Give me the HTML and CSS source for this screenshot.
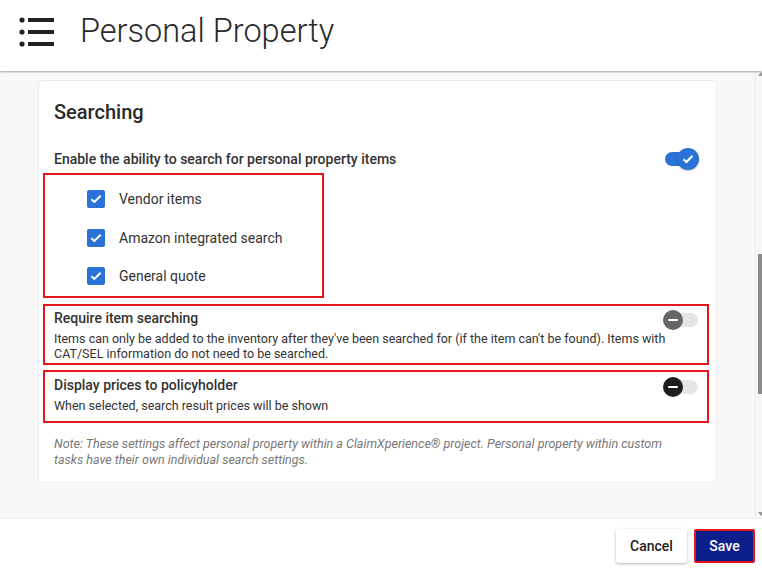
FILE: index.html
```html
<!DOCTYPE html>
<html lang="en">
<head>
    <meta charset="UTF-8">
    <meta name="viewport" content="width=device-width, initial-scale=1.0">
    <title>Personal Property</title>
    <link rel="stylesheet" href="styles.css">
</head>
<body>
    <header class="top-bar">
        <svg class="menu-icon" width="36" height="30" viewBox="0 0 36 30">
            <circle cx="3" cy="3" r="2.6" fill="#222"/>
            <circle cx="3" cy="15" r="2.6" fill="#222"/>
            <circle cx="3" cy="27" r="2.6" fill="#222"/>
            <rect x="9" y="1" width="26" height="4" fill="#222"/>
            <rect x="9" y="13" width="26" height="4" fill="#222"/>
            <rect x="9" y="25" width="26" height="4" fill="#222"/>
        </svg>
        <h1 class="page-title">Personal Property</h1>
    </header>

    <div class="body-area">
        <main class="content">
            <section class="card">
                <h2 class="card-title">Searching</h2>

                <div class="setting-row main-setting">
                    <span class="setting-name">Enable the ability to search for personal property items</span>
                    <span class="toggle on">
                        <span class="knob">
                            <svg width="12" height="10" viewBox="0 0 12 10"><path d="M1.5 5.2 L4.5 8 L10.5 1.8" fill="none" stroke="#fff" stroke-width="2"/></svg>
                        </span>
                    </span>
                </div>

                <div class="outline check-group">
                    <label class="check-item"><span class="checkbox"><svg width="12" height="10" viewBox="0 0 12 10"><path d="M1.3 5.2 L4.4 8 L10.7 1.8" fill="none" stroke="#fff" stroke-width="2"/></svg></span>Vendor items</label>
                    <label class="check-item"><span class="checkbox"><svg width="12" height="10" viewBox="0 0 12 10"><path d="M1.3 5.2 L4.4 8 L10.7 1.8" fill="none" stroke="#fff" stroke-width="2"/></svg></span>Amazon integrated search</label>
                    <label class="check-item"><span class="checkbox"><svg width="12" height="10" viewBox="0 0 12 10"><path d="M1.3 5.2 L4.4 8 L10.7 1.8" fill="none" stroke="#fff" stroke-width="2"/></svg></span>General quote</label>
                </div>

                <div class="outline option-box">
                    <div class="option-text">
                        <div class="setting-name">Require item searching</div>
                        <p class="option-desc">Items can only be added to the inventory after they've been searched for (if the item can't be found). Items with CAT/SEL information do not need to be searched.</p>
                    </div>
                    <span class="toggle off"><span class="knob grey"><i class="dash"></i></span></span>
                </div>

                <div class="outline option-box short">
                    <div class="option-text">
                        <div class="setting-name">Display prices to policyholder</div>
                        <p class="option-desc">When selected, search result prices will be shown</p>
                    </div>
                    <span class="toggle off"><span class="knob dark"><i class="dash"></i></span></span>
                </div>

                <p class="note">Note: These settings affect personal property within a ClaimXperience® project. Personal property within custom tasks have their own individual search settings.</p>
            </section>
        </main>
        <div class="scrollbar">
            <span class="arrow up"></span>
            <span class="thumb"></span>
            <span class="arrow down"></span>
        </div>
    </div>

    <footer class="footer">
        <button class="btn cancel">Cancel</button>
        <button class="btn save">Save</button>
    </footer>
</body>
</html>
```

FILE: styles.css
```css
html, body {
    margin: 0;
    padding: 0;
    height: 100%;
}

body {
    font-family: Roboto, "Liberation Sans", Arial, sans-serif;
    color: #333;
    display: flex;
    flex-direction: column;
    overflow: hidden;
    background-color: #fff;
}

.top-bar {
    height: 71px;
    flex: 0 0 71px;
    box-sizing: border-box;
    padding-bottom: 9px;
    display: flex;
    align-items: center;
    background-color: #fff;
    box-shadow: 0 1px 2px rgba(0, 0, 0, 0.35);
    position: relative;
    z-index: 2;
}

.menu-icon {
    margin-left: 19px;
    margin-top: 1px;
}

.page-title {
    margin: 0 0 0 25px;
    font-size: 32.5px;
    font-weight: 300;
    color: #2a2a2a;
}

.body-area {
    flex: 1;
    display: flex;
    background-color: #f8f8f8;
    min-height: 0;
}

.content {
    flex: 1;
    padding: 9px 38px 0 38px;
}

.card {
    width: 679px;
    box-sizing: border-box;
    background-color: #fff;
    border: 1px solid #ececec;
    border-radius: 4px;
    padding: 19px 10px 14px 4px;
}

.card-title {
    margin: 0 0 0 11px;
    font-size: 20px;
    font-weight: 500;
    line-height: 24px;
    color: #2b2b2b;
}

.setting-name {
    font-size: 14px;
    font-weight: 500;
    color: #333;
}

.setting-row {
    display: flex;
    justify-content: space-between;
    align-items: center;
    margin: 24px 0 3px 11px;
    height: 22px;
    padding-right: 8px;
}

.toggle {
    position: relative;
    display: inline-block;
    width: 34px;
    height: 14px;
    border-radius: 7px;
    background-color: #e6e6e6;
}

.toggle.on {
    background-color: #2a72d6;
    width: 28px;
    margin-right: 5px;
}

.knob {
    position: absolute;
    top: -4px;
    width: 22px;
    height: 22px;
    border-radius: 50%;
    display: flex;
    align-items: center;
    justify-content: center;
}

.toggle.on .knob {
    right: -6px;
    top: -4px;
    background-color: #2a72d6;
    box-shadow: 0 1px 2px rgba(0, 0, 0, 0.25);
}

.toggle.off .knob {
    left: -1px;
    top: -3px;
    width: 20px;
    height: 20px;
}

.knob.grey {
    background-color: #666;
}

.knob.dark {
    background-color: #1e1e1e;
}

.dash {
    display: block;
    width: 10px;
    height: 2px;
    background-color: #fff;
    border-radius: 1px;
}

.outline {
    border: 2px solid #e8141c;
    box-sizing: border-box;
}

.check-group {
    width: 281px;
    height: 125px;
    padding: 14px 0 0 42px;
}

.check-item {
    display: flex;
    align-items: center;
    font-size: 14px;
    color: #333;
    height: 20px;
    margin-bottom: 18.5px;
}

.checkbox {
    width: 18px;
    height: 18px;
    border-radius: 2px;
    background-color: #2a72d6;
    display: flex;
    align-items: center;
    justify-content: center;
    margin-right: 14px;
}

.option-box {
    width: 666px;
    margin-top: 6px;
    height: 61px;
    display: flex;
    justify-content: space-between;
    align-items: flex-start;
    padding: 4px 9px 0 9px;
}

.option-box.short {
    margin-top: 5px;
    height: 53px;
    padding-top: 5px;
}

.option-box .toggle {
    margin-top: 3px;
    flex: 0 0 auto;
}

.option-text {
    flex: 1;
    min-width: 0;
}

.option-desc {
    margin: 5px -40px 0 0;
    font-size: 12.5px;
    line-height: 15px;
    color: #333;
}

.note {
    margin: 13px 0 0 11px;
    font-size: 12.5px;
    line-height: 16px;
    font-style: italic;
    color: #777;
    padding-right: 20px;
}

.scrollbar {
    width: 8px;
    flex: 0 0 8px;
    border-left: 1px solid #ececec;
    background-color: #f8f8f8;
    position: relative;
}

.thumb {
    position: absolute;
    left: 2px;
    right: 0;
    top: 183px;
    height: 140px;
    background-color: #8c8c8c;
}

.arrow {
    position: absolute;
    left: 2px;
    width: 0;
    height: 0;
    border-left: 3px solid transparent;
    border-right: 3px solid transparent;
}

.arrow.up {
    top: 1px;
    border-bottom: 4px solid #999;
}

.arrow.down {
    bottom: 2px;
    border-top: 4px solid #999;
}

.footer {
    flex: 0 0 55px;
    height: 55px;
    display: flex;
    justify-content: flex-end;
    align-items: flex-start;
    padding: 10px 7px 0 0;
    box-sizing: border-box;
    gap: 7px;
    background-color: #fff;
    border-top: 1px solid #ececec;
}

.btn {
    height: 34px;
    font-family: Roboto, "Liberation Sans", Arial, sans-serif;
    font-size: 14px;
    font-weight: 500;
    border-radius: 3px;
    cursor: pointer;
}

.cancel {
    width: 71px;
    background-color: #fff;
    color: #1e1e1e;
    border: none;
    box-shadow: 0 1px 3px rgba(0, 0, 0, 0.3);
}

.save {
    width: 61px;
    background-color: #0c1e8a;
    color: #fff;
    border: 2px solid #e8141c;
    border-radius: 2px;
}
```
